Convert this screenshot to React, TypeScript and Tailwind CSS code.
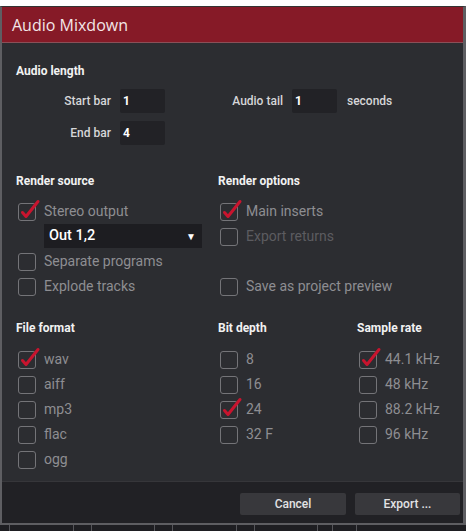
import React from "react";

const Check = () => (
  <svg className="absolute left-[1px] top-[-4px]" width="22" height="22" viewBox="0 0 22 22">
    <path d="M3.5 13.5 L7 17.5 L19 2.5" fill="none" stroke="#c8142e" strokeWidth="3" strokeLinecap="round" strokeLinejoin="round" />
  </svg>
);

function Box({ checked }: { checked?: boolean }) {
  return (
    <div className="relative w-[18px] h-[18px] shrink-0">
      <div className="w-[18px] h-[18px] rounded-[3px] border-[1.5px] border-[#747478]" />
      {checked && <Check />}
    </div>
  );
}

function CB({ label, checked, dim }: { label: string; checked?: boolean; dim?: boolean }) {
  return (
    <div className="h-[25px] flex items-center gap-[8px] pl-[2px]">
      <Box checked={checked} />
      <span className={"text-[14px] " + (dim ? "text-[#5c5c60]" : "text-[#8e8e92]")}>{label}</span>
    </div>
  );
}

const H = ({ children }: { children: React.ReactNode }) => (
  <div className="h-[14px] leading-[14px] text-[12px] font-bold text-[#f2f2f2]">{children}</div>
);

const Input = ({ v }: { v: string }) => (
  <div className="w-[45px] h-[24px] bg-[#222226] rounded-[2px] flex items-center px-[3px] text-[12px] font-bold text-white">{v}</div>
);

export default function App() {
  return (
    <div className="w-[471px] h-[531px] bg-white pt-[6px] overflow-hidden" style={{ fontFamily: "Roboto, 'Noto Sans', sans-serif" }}>
      <div className="w-[466px] h-[519px] flex flex-col bg-[#2c2d31] border-l-2 border-r-[3px] border-b-2 border-[#5e5e62] border-t border-t-[#333]">
        <div className="h-[36px] shrink-0 bg-[#861a27] border-b border-[#8a5058] flex items-center pl-[10px]">
          <span className="text-[16px] text-[#f3e6e8]" style={{ fontFamily: "'Open Sans', sans-serif" }}>Audio Mixdown</span>
        </div>
        <div className="flex-1 pl-[14px] pt-[21px]">
          <H>Audio length</H>
          <div className="mt-[11px] flex items-center h-[24px]">
            <div className="w-[95px] text-right text-[12px] text-[#d6d6d8] font-medium">Start bar</div>
            <div className="ml-[9px]"><Input v="1" /></div>
            <div className="w-[118px] text-right text-[12px] text-[#d6d6d8] font-medium">Audio tail</div>
            <div className="ml-[9px]"><Input v="1" /></div>
            <div className="ml-[10px] text-[12px] text-[#d6d6d8] font-medium">seconds</div>
          </div>
          <div className="mt-[8px] flex items-center h-[24px]">
            <div className="w-[95px] text-right text-[12px] text-[#d6d6d8] font-medium">End bar</div>
            <div className="ml-[9px]"><Input v="4" /></div>
          </div>

          <div className="mt-[29px] flex">
            <div className="w-[202px]">
              <H>Render source</H>
              <div className="mt-[11px]">
                <CB label="Stereo output" checked />
                <div className="h-[25px] pl-[28px]">
                  <div className="w-[158px] h-[24px] bg-[#1d1d21] flex items-center justify-between pl-[5px] pr-[6px]">
                    <span className="text-[14.5px] font-medium text-white">Out 1,2</span>
                    <span className="text-[10px] text-white">▼</span>
                  </div>
                </div>
                <CB label="Separate programs" />
                <CB label="Explode tracks" />
              </div>
            </div>
            <div>
              <H>Render options</H>
              <div className="mt-[11px]">
                <CB label="Main inserts" checked />
                <CB label="Export returns" dim />
                <div className="h-[25px]" />
                <CB label="Save as project preview" />
              </div>
            </div>
          </div>

          <div className="mt-[22px] flex">
            <div className="w-[202px]">
              <H>File format</H>
              <div className="mt-[12px]">
                <CB label="wav" checked />
                <CB label="aiff" />
                <CB label="mp3" />
                <CB label="flac" />
                <CB label="ogg" />
              </div>
            </div>
            <div className="w-[139px]">
              <H>Bit depth</H>
              <div className="mt-[12px]">
                <CB label="8" />
                <CB label="16" />
                <CB label="24" checked />
                <CB label="32 F" />
              </div>
            </div>
            <div>
              <H>Sample rate</H>
              <div className="mt-[12px]">
                <CB label="44.1 kHz" checked />
                <CB label="48 kHz" />
                <CB label="88.2 kHz" />
                <CB label="96 kHz" />
              </div>
            </div>
          </div>
        </div>
        <div className="h-[42px] shrink-0 bg-[#212125] border-t border-[#36363a] flex items-center justify-end gap-[9px] pr-[3px] pt-[2px]">
          <button className="w-[106px] h-[22px] bg-[#38383c] rounded-[2px] text-[12px] font-medium text-[#e2e2e4]">Cancel</button>
          <button className="w-[105px] h-[22px] bg-[#38383c] rounded-[2px] text-[12px] font-medium text-[#e2e2e4]">Export ...</button>
        </div>
      </div>
      <div className="w-[466px] h-[6px] bg-[#1e1e22] flex">
        <div className="w-[10px] border-r border-[#55555a]" />
        <div className="w-[64px] border-r border-[#55555a]" />
        <div className="w-[18px] border-r border-[#55555a]" />
        <div className="w-[63px] border-r border-[#55555a]" />
        <div className="w-[18px] border-r border-[#55555a]" />
        <div className="w-[64px] border-r border-[#55555a]" />
        <div className="w-[18px] border-r border-[#55555a]" />
        <div className="w-[63px] border-r border-[#55555a]" />
        <div className="w-[15px] border-r border-[#55555a]" />
        <div className="w-[24px] border-r border-[#55555a]" />
      </div>
    </div>
  );
}
